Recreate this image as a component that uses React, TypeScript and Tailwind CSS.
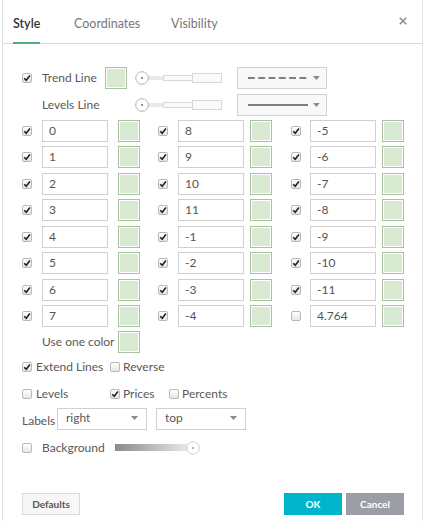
import React from 'react';

const Check: React.FC<{ on?: boolean }> = ({ on = true }) => (
  <span className="flex w-[10px] h-[10px] items-center justify-center rounded-[2px] border border-[#b8b8b8] bg-gradient-to-b from-white to-[#e6e6e6]">
    {on && (
      <svg width="8" height="8" viewBox="0 0 8 8">
        <path d="M1.2 4.2 L3.2 6.2 L6.9 1.4" fill="none" stroke="#222" strokeWidth="1.6" />
      </svg>
    )}
  </span>
);

const Swatch: React.FC = () => (
  <span className="block w-[22px] h-[22px] border border-[#a9c0a3] p-px bg-white">
    <span className="block w-full h-full bg-[#d9ead3]" />
  </span>
);

const Slider: React.FC = () => (
  <svg width="88" height="16" viewBox="0 0 88 16">
    <rect x="13" y="7" width="16" height="2" fill="#fff" stroke="#d4d4d4" />
    <rect x="28.5" y="5.5" width="29" height="5" fill="#fafafa" stroke="#d8d8d8" />
    <rect x="57.5" y="3.5" width="29" height="9" fill="#fafafa" stroke="#d8d8d8" />
    <circle cx="7" cy="8" r="6.3" fill="#fff" stroke="#aeb2c4" />
    <circle cx="7" cy="8" r="1.1" fill="#777" />
  </svg>
);

const Arrow: React.FC = () => (
  <svg width="7" height="4" viewBox="0 0 7 4">
    <path d="M0 0 L7 0 L3.5 4 Z" fill="#8a8a8a" />
  </svg>
);

const levels = [
  ['0', '1', '2', '3', '4', '5', '6', '7'],
  ['8', '9', '10', '11', '-1', '-2', '-3', '-4'],
  ['-5', '-6', '-7', '-8', '-9', '-10', '-11', '4.764'],
];
const colWidths = ['w-[136px]', 'w-[133px]', 'w-[114px]'];
const inputOffsets = ['w-[20px]', 'w-[20px]', 'w-[19px]'];
const swatchGaps = ['ml-[10px]', 'ml-[6px]', 'ml-[6px]'];

export default function App() {
  return (
    <div className="w-[424px] h-[521px] bg-white font-['Lato',sans-serif] text-[12px] text-[#595959] overflow-hidden">
      <div className="ml-[2px] w-[421px] h-full border-l border-r border-[#e2e2e2] flex flex-col">
        {/* Tabs */}
        <div className="h-[44px] border-b border-[#dcdcdc] flex items-stretch pl-[10px]">
          <div className="w-[61px]">
            <span className="inline-flex h-[44px] -mb-px items-center pt-[6px] border-b-2 border-[#4cae7c] text-[12.5px] text-[#333] font-semibold">
              Style
            </span>
          </div>
          <div className="w-[97px] flex items-center pt-[6px] text-[12.5px] text-[#777]">Coordinates</div>
          <div className="flex items-center pt-[6px] text-[12.5px] text-[#777]">Visibility</div>
          <div className="ml-auto mr-[15px] mt-[17px]">
            <svg width="8" height="8" viewBox="0 0 8 8">
              <path d="M0.8 0.8 L7.2 7.2 M7.2 0.8 L0.8 7.2" stroke="#8c8c8c" strokeWidth="1.6" />
            </svg>
          </div>
        </div>

        <div className="pl-[19px] flex flex-col">
          {/* Trend line */}
          <div className="mt-[23px] h-[22px] flex items-center">
            <div className="w-[20px]"><Check /></div>
            <div className="w-[63px]">Trend Line</div>
            <Swatch />
            <div className="ml-[8px]"><Slider /></div>
            <div className="ml-[14px] w-[90px] h-[22px] border border-[#d2d2d2] bg-[#f8f8f8] flex items-center pl-[10px] pr-[6px] gap-[6px]">
              <svg width="61" height="4" viewBox="0 0 61 4">
                <path d="M0 2 H61" stroke="#555" strokeWidth="1.5" strokeDasharray="7 3.6" />
              </svg>
              <Arrow />
            </div>
          </div>
          {/* Levels line */}
          <div className="mt-[5px] h-[22px] flex items-center">
            <div className="w-[20px]" />
            <div className="w-[63px]">Levels Line</div>
            <div className="w-[22px]" />
            <div className="ml-[8px]"><Slider /></div>
            <div className="ml-[14px] w-[90px] h-[22px] border border-[#d2d2d2] bg-[#f8f8f8] flex items-center pl-[10px] pr-[6px] gap-[5px]">
              <svg width="62" height="4" viewBox="0 0 62 4">
                <path d="M0 2 H62" stroke="#555" strokeWidth="1.5" />
              </svg>
              <Arrow />
            </div>
          </div>

          {/* Levels grid */}
          <div className="mt-[4px] flex">
            {levels.map((col, ci) => (
              <div key={ci} className={`${colWidths[ci]} flex flex-col gap-y-[4.43px]`}>
                {col.map((v, ri) => (
                  <div key={v} className="h-[22px] flex items-center">
                    <div className={inputOffsets[ci]}>
                      <Check on={!(ci === 2 && ri === 7)} />
                    </div>
                    <div className="w-[66px] h-[22px] border border-[#d0d0d0] bg-white flex items-center pl-[6px] text-[#555]">
                      {v}
                    </div>
                    <div className={swatchGaps[ci]}><Swatch /></div>
                  </div>
                ))}
                {ci === 0 && (
                  <div className="h-[22px] flex items-center">
                    <div className="w-[20px]" />
                    <div className="w-[76px]">Use one color</div>
                    <Swatch />
                  </div>
                )}
              </div>
            ))}
          </div>

          {/* Extend / Reverse */}
          <div className="mt-[6px] h-[16px] flex items-center">
            <div className="w-[14px]"><Check /></div>
            <div className="w-[74px]">Extend Lines</div>
            <div className="w-[13px]"><Check on={false} /></div>
            <div>Reverse</div>
          </div>
          {/* Levels / Prices / Percents */}
          <div className="mt-[11px] h-[16px] flex items-center">
            <div className="w-[14px]"><Check on={false} /></div>
            <div className="w-[74px]">Levels</div>
            <div className="w-[13px]"><Check /></div>
            <div className="w-[46px]">Prices</div>
            <div className="w-[13px]"><Check on={false} /></div>
            <div>Percents</div>
          </div>
          {/* Labels */}
          <div className="mt-[6px] h-[22px] flex items-center">
            <div className="w-[35px] pt-[4px]">Labels</div>
            <div className="w-[90px] h-[22px] border border-[#d0d0d0] bg-white flex items-center justify-between pl-[8px] pr-[8px] pb-[3px]">
              <span>right</span>
              <Arrow />
            </div>
            <div className="ml-[9px] w-[90px] h-[22px] border border-[#d0d0d0] bg-white flex items-center justify-between pl-[8px] pr-[8px] pb-[3px]">
              <span>top</span>
              <Arrow />
            </div>
          </div>
          {/* Background */}
          <div className="mt-[10px] h-[16px] flex items-center">
            <div className="w-[20px]"><Check on={false} /></div>
            <div className="w-[73px]">Background</div>
            <svg width="90" height="16" viewBox="0 0 90 16">
              <defs>
                <linearGradient id="bg" x1="0" x2="1" y1="0" y2="0">
                  <stop offset="0" stopColor="#8a8a8a" />
                  <stop offset="1" stopColor="#ececec" />
                </linearGradient>
              </defs>
              <rect x="0" y="4" width="76" height="7" fill="url(#bg)" />
              <circle cx="78" cy="8" r="6.3" fill="#fff" stroke="#cfcfcf" />
              <circle cx="78" cy="8" r="1" fill="#999" />
            </svg>
          </div>
        </div>

        {/* Footer */}
        <div className="mt-[37px] pl-[19px] pr-[18px] flex items-center">
          <button className="w-[58px] h-[22px] border border-[#dadada] bg-[#f7f7f7] text-[10px] font-bold text-[#555]">
            Defaults
          </button>
          <button className="ml-auto w-[58px] h-[22px] bg-[#00b4cc] text-[10px] font-bold text-white">
            OK
          </button>
          <button className="ml-[4px] w-[58px] h-[22px] bg-[#9b9ea5] text-[10px] font-bold text-white">
            Cancel
          </button>
        </div>
      </div>
    </div>
  );
}
